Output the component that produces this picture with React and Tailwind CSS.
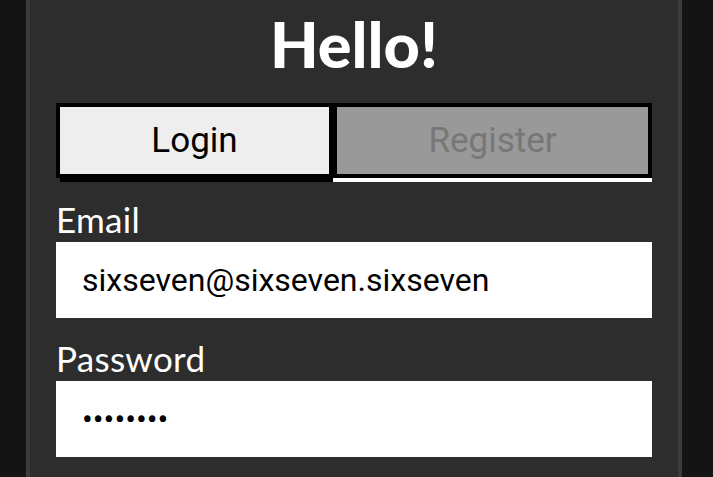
import React from 'react';

const App = () => {
  return (
    <div className="min-h-screen bg-[#141414]">
      <div className="ml-[26px] w-[656px] min-h-[477px] border-x-4 border-[#3c3c3c] bg-[#2d2d2d] px-[26px] pt-[8px] font-['Roboto',sans-serif]">
        <h1 className="text-center font-['Lato',sans-serif] text-[63px] font-black leading-[72px] text-white">Hello!</h1>

        <div className="mt-[23px] flex">
          <button className="flex-auto h-[75px] border-4 border-black bg-[#eeeeee] pt-[2px] text-[35px] text-black shadow-[4px_4px_0_#000]">
            Login
          </button>
          <button className="flex-auto h-[75px] border-4 border-black bg-[#999999] pt-[2px] text-[35px] text-[#777777] shadow-[0_4px_0_#fff]">
            Register
          </button>
        </div>

        <form className="mt-[22px]">
          <label className="mb-[4px] block font-['Lato',sans-serif] text-[35px] leading-[38px] tracking-[0.3px] text-white">Email</label>
          <input
            readOnly
            value="sixseven@sixseven.sixseven"
            className="block h-[76px] w-full bg-white px-[26px] text-[32px] text-black outline-none"
          />
          <label className="mt-[21px] mb-[4px] block font-['Lato',sans-serif] text-[35px] leading-[38px] tracking-[0.3px] text-white">Password</label>
          <input
            readOnly
            type="password"
            value="12345678"
            className="block h-[76px] w-full bg-white px-[26px] text-[32px] text-black outline-none"
          />
        </form>
      </div>
    </div>
  );
};

export default App;
